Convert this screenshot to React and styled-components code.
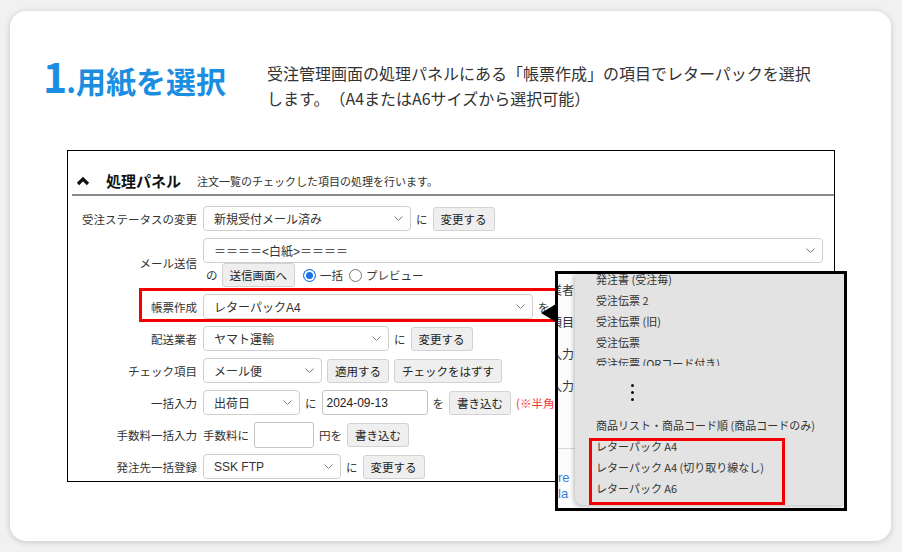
import React from "react";
import styled, { createGlobalStyle } from "styled-components";

const GlobalStyle = createGlobalStyle`
  html, body { margin: 0; padding: 0; background: #f1f1f1; }
  body { font-family: "Noto Sans CJK JP", sans-serif; text-spacing-trim: space-all; }
  * { box-sizing: border-box; }
`;

const Page = styled.div`
  width: 902px;
  height: 552px;
  padding: 11px 11px 11px 10px;
`;

const Card = styled.div`
  position: relative;
  width: 881px;
  height: 530px;
  background: #fff;
  border-radius: 16px;
  box-shadow: 0 1px 6px rgba(0, 0, 0, 0.18);
  display: flex;
  flex-direction: column;
`;

const Header = styled.div`
  display: flex;
  padding: 44px 0 0 33px;
`;

const Title = styled.h1`
  flex: 0 0 224px;
  margin: 0;
  color: #1b8ee2;
  font-size: 30px;
  font-weight: 700;
  line-height: 40px;
  white-space: nowrap;
`;

const TitleNum = styled.span`
  font-size: 41px;
  letter-spacing: -1px;
`;

const Lead = styled.p`
  margin: 6px 0 0 0;
  font-size: 16px;
  line-height: 25px;
  color: #333;
  text-spacing-trim: space-all;
`;

const Panel = styled.div`
  position: relative;
  margin: 39px 0 0 57px;
  width: 768px;
  border: 1px solid #000;
  font-family: "Liberation Sans", "Noto Sans CJK JP", sans-serif;
  font-size: 11.5px;
  color: #333;
  padding-bottom: 2px;
`;

const PanelHead = styled.div`
  display: flex;
  align-items: center;
  margin-left: 4px;
  padding: 20px 0 3px 4px;
  border-bottom: 2px solid #8a8a8a;
  line-height: 20px;
`;

const PanelTitle = styled.span`
  font-family: "Noto Sans CJK JP", sans-serif;
  font-size: 15px;
  font-weight: 700;
  color: #111;
  margin: 0 16px 0 16px;
`;

const PanelSub = styled.span`
  font-family: "Noto Sans CJK JP", sans-serif;
  font-size: 11px;
  color: #333;
`;

const Form = styled.div`
  display: grid;
  grid-template-columns: 129px 1fr;
  column-gap: 6px;
  row-gap: 7px;
  padding-top: 10px;
`;

const Label = styled.div`
  align-self: center;
  text-align: right;
  white-space: nowrap;
  font-family: "Noto Sans CJK JP", sans-serif;
`;

const Field = styled.div`
  display: flex;
  align-items: center;
  gap: 5px;
  height: 25px;
  white-space: nowrap;
`;

const Stack = styled.div`
  display: flex;
  flex-direction: column;
`;

const SubLine = styled.div`
  display: flex;
  align-items: center;
  gap: 4px;
  height: 24px;
  padding-left: 3px;
`;

const SelectBox = styled.div`
  display: flex;
  align-items: center;
  justify-content: space-between;
  height: 25px;
  padding: 0 7px 0 10px;
  border: 1px solid #cfcfcf;
  border-radius: 4px;
  background: #fff;
  color: #333;
  font-size: 12px;
`;

const InputBox = styled.div`
  display: flex;
  align-items: center;
  height: ${(p) => p.$h || 25}px;
  padding: 0 4px;
  border: 1px solid #c4c4c4;
  border-radius: 3px;
  background: #fff;
  font-size: 12px;
  color: #222;
`;

const Btn = styled.div`
  display: flex;
  align-items: center;
  height: 24px;
  padding: 0 7px;
  border: 1px solid #d2d2d2;
  border-radius: 3px;
  background: #efefef;
  color: #222;
  font-family: "Noto Sans CJK JP", sans-serif;
  font-size: 11.5px;
`;

const Warn = styled.span`
  color: #f23a3a;
  font-family: "Noto Sans CJK JP", sans-serif;
`;

const Radio = styled.span`
  display: inline-block;
  width: 13px;
  height: 13px;
  border-radius: 50%;
  border: 1px solid ${(p) => (p.$on ? "#1a73e8" : "#767676")};
  background: ${(p) => (p.$on ? "#1a73e8" : "#fff")};
  box-shadow: ${(p) => (p.$on ? "inset 0 0 0 2px #fff" : "none")};
  margin-left: ${(p) => p.$ml || 0}px;
`;

const Highlight = styled.div`
  position: absolute;
  left: 71px;
  top: 137px;
  width: 500px;
  height: 34px;
  border: 3px solid #f50000;
  pointer-events: none;
`;

const Popup = styled.div`
  position: absolute;
  left: 545px;
  top: 260px;
  width: 292px;
  height: 240px;
  border: 3px solid #000;
  background: #fbfbfb;
  display: flex;
  font-family: "Noto Sans CJK JP", sans-serif;
  &::before {
    content: "";
    position: absolute;
    left: -17px;
    top: 30px;
    border-right: 15px solid #000;
    border-top: 9px solid transparent;
    border-bottom: 9px solid transparent;
  }
`;

const Strip = styled.div`
  flex: 0 0 17px;
  overflow: hidden;
  display: flex;
  flex-direction: column;
  font-size: 12px;
  color: #333;
`;

const StripLabel = styled.div`
  display: flex;
  justify-content: flex-end;
  height: 32px;
  line-height: 32px;
  padding-right: 1px;
  white-space: nowrap;
`;

const StripRule = styled.div`
  margin-top: 46px;
  height: 1px;
  background: #d6d6d6;
`;

const StripLink = styled.div`
  font-family: "Liberation Sans", sans-serif;
  font-size: 13px;
  line-height: 16px;
  color: #3d7be0;
  margin-top: ${(p) => p.$mt || 0}px;
  white-space: nowrap;
`;

const Menu = styled.div`
  flex: 1;
  height: 231px;
  background: #e3e3e3;
  border-radius: 0 0 0 7px;
  box-shadow: -1px 1px 4px rgba(0, 0, 0, 0.28);
  display: flex;
  flex-direction: column;
  font-size: 11px;
  color: #333;
`;

const Clip = styled.div`
  height: 92px;
  overflow: hidden;
`;

const ClipInner = styled.div`
  margin-top: -5px;
`;

const Item = styled.div`
  height: 21px;
  line-height: 21px;
  padding-left: 21px;
  white-space: nowrap;
`;

const Dots = styled.div`
  height: 49px;
  padding: 18px 0 0 56px;
  display: flex;
  flex-direction: column;
  gap: 4px;
`;

const Dot = styled.span`
  width: 3px;
  height: 3px;
  border-radius: 50%;
  background: #111;
`;

const Boxed = styled.div`
  position: relative;
  &::after {
    content: "";
    position: absolute;
    left: 14px;
    top: 2px;
    width: 190px;
    height: 61px;
    border: 3px solid #f50000;
  }
`;

const Chevron = () => (
  <svg width="9" height="5" viewBox="0 0 9 5">
    <path d="M0.5 0.5 L4.5 4.5 L8.5 0.5" stroke="#7a7a7a" strokeWidth="1" fill="none" />
  </svg>
);

const Select = ({ w, children }) => (
  <SelectBox style={{ width: w }}>
    <span>{children}</span>
    <Chevron />
  </SelectBox>
);

const UpIcon = () => (
  <svg width="14" height="10" viewBox="0 0 14 10">
    <path d="M2 8 L7 3 L12 8" stroke="#111" strokeWidth="3.2" fill="none" strokeLinejoin="miter" />
  </svg>
);

export default function App() {
  return (
    <>
      <GlobalStyle />
      <Page>
        <Card>
          <Header>
            <Title>
              <TitleNum>1</TitleNum>.用紙を選択
            </Title>
            <Lead>
              受注管理画面の処理パネルにある「帳票作成」の項目でレターパックを選択
              <br />
              します。（A4またはA6サイズから選択可能）
            </Lead>
          </Header>

          <Panel>
            <PanelHead>
              <UpIcon />
              <PanelTitle>処理パネル</PanelTitle>
              <PanelSub>注文一覧のチェックした項目の処理を行います。</PanelSub>
            </PanelHead>
            <Form>
              <Label>受注ステータスの変更</Label>
              <Field>
                <Select w={208}>新規受付メール済み</Select>
                <span>に</span>
                <Btn>変更する</Btn>
              </Field>

              <Label>メール送信</Label>
              <Stack>
                <Field>
                  <Select w={620}>＝＝＝＝&lt;白紙&gt;＝＝＝＝</Select>
                </Field>
                <SubLine>
                  <span>の</span>
                  <Btn>送信画面へ</Btn>
                  <Radio $on $ml={4} />
                  <span>一括</span>
                  <Radio $ml={2} />
                  <span>プレビュー</span>
                </SubLine>
              </Stack>

              <Label>帳票作成</Label>
              <Field>
                <Select w={330}>レターパックA4</Select>
                <span>を</span>
                <Btn>出力する</Btn>
              </Field>

              <Label>配送業者</Label>
              <Field>
                <Select w={186}>ヤマト運輸</Select>
                <span>に</span>
                <Btn>変更する</Btn>
              </Field>

              <Label>チェック項目</Label>
              <Field>
                <Select w={119}>メール便</Select>
                <Btn>適用する</Btn>
                <Btn>チェックをはずす</Btn>
              </Field>

              <Label>一括入力</Label>
              <Field>
                <Select w={97}>出荷日</Select>
                <span>に</span>
                <InputBox style={{ width: 106 }}>2024-09-13</InputBox>
                <span>を</span>
                <Btn>書き込む</Btn>
                <Warn>(※半角スラッシュ区切り)</Warn>
              </Field>

              <Label>手数料一括入力</Label>
              <Field>
                <span>手数料に</span>
                <InputBox $h={26} style={{ width: 60 }} />
                <span>円を</span>
                <Btn>書き込む</Btn>
              </Field>

              <Label>発注先一括登録</Label>
              <Field>
                <Select w={138}>SSK FTP</Select>
                <span>に</span>
                <Btn>変更する</Btn>
              </Field>
            </Form>
            <Highlight />
          </Panel>

          <Popup>
            <Strip>
              <StripLabel>配送業者</StripLabel>
              <StripLabel>チェック項目</StripLabel>
              <StripLabel>一括入力</StripLabel>
              <StripLabel>一括入力</StripLabel>
              <StripRule />
              <StripLink $mt={21}>re</StripLink>
              <StripLink>la</StripLink>
            </Strip>
            <Menu>
              <Clip>
                <ClipInner>
                  <Item>発注書 (受注毎)</Item>
                  <Item>受注伝票 2</Item>
                  <Item>受注伝票 (旧)</Item>
                  <Item>受注伝票</Item>
                  <Item>受注伝票 (QRコード付き)</Item>
                </ClipInner>
              </Clip>
              <Dots>
                <Dot />
                <Dot />
                <Dot />
              </Dots>
              <Item>商品リスト・商品コード順 (商品コードのみ)</Item>
              <Boxed>
                <Item>レターパック A4</Item>
                <Item>レターパック A4 (切り取り線なし)</Item>
                <Item>レターパック A6</Item>
              </Boxed>
            </Menu>
          </Popup>
        </Card>
      </Page>
    </>
  );
}
